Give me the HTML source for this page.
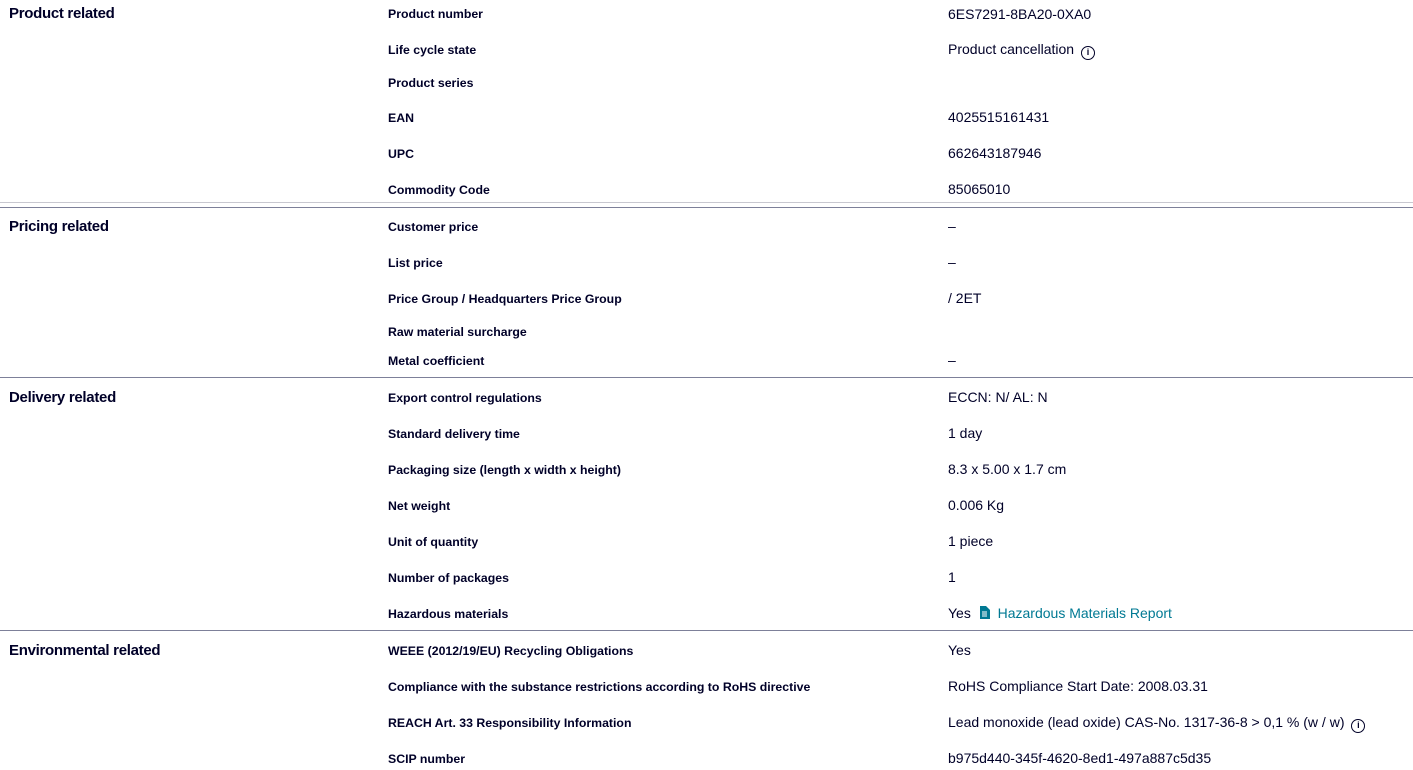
<!DOCTYPE html>
<html><head><meta charset="utf-8"><style>
body{margin:0;width:1413px;height:770px;overflow:hidden;background:#fff;font-family:"Liberation Sans",sans-serif;color:#000028;position:relative}
.t{position:absolute;line-height:18px;white-space:nowrap;margin-top:1px}
.h{left:9px;font-size:15px;font-weight:bold;letter-spacing:-0.3px}
.l{left:388px;font-size:12.3px;font-weight:bold}
.v{left:948px;font-size:14px}
.line{position:absolute;left:0;width:1413px;height:1px;background:#7d8099}
a{color:#007993;text-decoration:none}
.i{display:inline-block;box-sizing:border-box;width:14px;height:14px;border:1.3px solid #000028;border-radius:50%;font-size:9px;line-height:11px;text-align:center;font-weight:bold;vertical-align:-1px;margin-left:3px}
</style></head><body>
<div class="t h" style="top:4px">Product related</div>
<div class="t l" style="top:4px">Product number</div><div class="t v" style="top:4px">6ES7291-8BA20-0XA0</div>
<div class="t l" style="top:40px">Life cycle state</div><div class="t v" style="top:39px">Product cancellation <span class="i">i</span></div>
<div class="t l" style="top:73px">Product series</div>
<div class="t l" style="top:108px">EAN</div><div class="t v" style="top:107px">4025515161431</div>
<div class="t l" style="top:144px">UPC</div><div class="t v" style="top:143px">662643187946</div>
<div class="t l" style="top:180px">Commodity Code</div><div class="t v" style="top:179px">85065010</div>
<div class="line" style="top:202px;background:#c8c8d0"></div>
<div class="line" style="top:207px"></div>
<div class="t h" style="top:217px">Pricing related</div>
<div class="t l" style="top:217px">Customer price</div><div class="t v" style="top:216px">–</div>
<div class="t l" style="top:253px">List price</div><div class="t v" style="top:252px">–</div>
<div class="t l" style="top:289px">Price Group / Headquarters Price Group</div><div class="t v" style="top:288px">/ 2ET</div>
<div class="t l" style="top:322px">Raw material surcharge</div>
<div class="t l" style="top:351px">Metal coefficient</div><div class="t v" style="top:350px">–</div>
<div class="line" style="top:377px"></div>
<div class="t h" style="top:388px">Delivery related</div>
<div class="t l" style="top:388px">Export control regulations</div><div class="t v" style="top:387px">ECCN: N/ AL: N</div>
<div class="t l" style="top:424px">Standard delivery time</div><div class="t v" style="top:423px">1 day</div>
<div class="t l" style="top:460px">Packaging size (length x width x height)</div><div class="t v" style="top:459px">8.3 x 5.00 x 1.7 cm</div>
<div class="t l" style="top:496px">Net weight</div><div class="t v" style="top:495px">0.006 Kg</div>
<div class="t l" style="top:532px">Unit of quantity</div><div class="t v" style="top:531px">1 piece</div>
<div class="t l" style="top:568px">Number of packages</div><div class="t v" style="top:567px">1</div>
<div class="t l" style="top:604px">Hazardous materials</div><div class="t v" style="top:603px">Yes <svg width="11" height="13" viewBox="0 0 11 13" style="vertical-align:-1px;margin:0 4px"><path d="M1 0h6l4 4v9H1z" fill="#007993"/><path d="M3 6h5M3 8h5M3 10h5" stroke="#fff" stroke-width="1"/></svg> <a>Hazardous Materials Report</a></div>
<div class="line" style="top:630px"></div>
<div class="t h" style="top:641px">Environmental related</div>
<div class="t l" style="top:641px">WEEE (2012/19/EU) Recycling Obligations</div><div class="t v" style="top:640px">Yes</div>
<div class="t l" style="top:677px">Compliance with the substance restrictions according to RoHS directive</div><div class="t v" style="top:676px">RoHS Compliance Start Date: 2008.03.31</div>
<div class="t l" style="top:713px">REACH Art. 33 Responsibility Information</div><div class="t v" style="top:712px">Lead monoxide (lead oxide) CAS-No. 1317-36-8 &gt; 0,1 % (w / w) <span class="i">i</span></div>
<div class="t l" style="top:749px">SCIP number</div><div class="t v" style="top:748px">b975d440-345f-4620-8ed1-497a887c5d35</div>
</body></html>
